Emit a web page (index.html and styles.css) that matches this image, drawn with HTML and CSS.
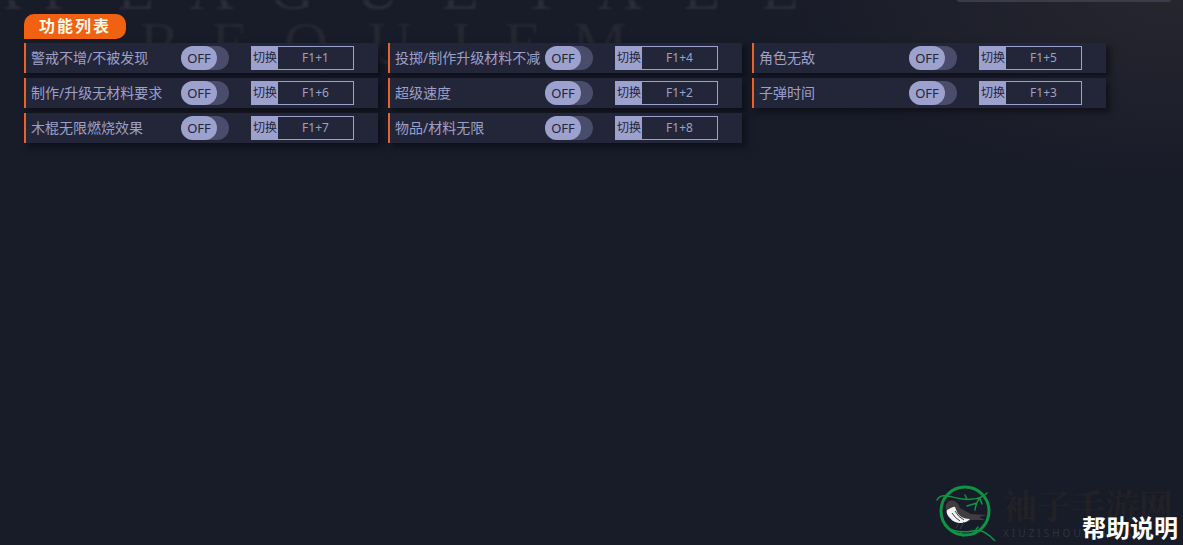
FILE: index.html
```
<!DOCTYPE html>
<html lang="zh-CN">
<head>
    <meta charset="UTF-8">
    <meta name="viewport" content="width=device-width, initial-scale=1.0">
    <title>功能列表</title>
    <link rel="stylesheet" href="styles.css">
</head>
<body>
    <svg class="backdrop" width="840" height="80" aria-hidden="true">
        <text class="backdrop-top" y="9" x="0 60 136 212 292 378 460 541 620 702 780">APLAGUETALE</text>
        <text class="backdrop-bottom" y="64" x="160 230 306 390 461 523 600">REQUIEM</text>
    </svg>
    <div class="top-bar"></div>

    <main class="content">
        <h1 class="title">功能列表</h1>
        <div class="options">
            <div class="option">
                <label class="option-name" for="opt1">警戒不增/不被发现</label>
                <label class="switch"><input type="checkbox" id="opt1"><span class="thumb">OFF</span></label>
                <div class="hotkey"><label for="key1">切换</label><input type="text" id="key1" value="F1+1" readonly></div>
            </div>
            <div class="option">
                <label class="option-name" for="opt2">投掷/制作升级材料不减</label>
                <label class="switch"><input type="checkbox" id="opt2"><span class="thumb">OFF</span></label>
                <div class="hotkey"><label for="key2">切换</label><input type="text" id="key2" value="F1+4" readonly></div>
            </div>
            <div class="option">
                <label class="option-name" for="opt3">角色无敌</label>
                <label class="switch"><input type="checkbox" id="opt3"><span class="thumb">OFF</span></label>
                <div class="hotkey"><label for="key3">切换</label><input type="text" id="key3" value="F1+5" readonly></div>
            </div>
            <div class="option">
                <label class="option-name" for="opt4">制作/升级无材料要求</label>
                <label class="switch"><input type="checkbox" id="opt4"><span class="thumb">OFF</span></label>
                <div class="hotkey"><label for="key4">切换</label><input type="text" id="key4" value="F1+6" readonly></div>
            </div>
            <div class="option">
                <label class="option-name" for="opt5">超级速度</label>
                <label class="switch"><input type="checkbox" id="opt5"><span class="thumb">OFF</span></label>
                <div class="hotkey"><label for="key5">切换</label><input type="text" id="key5" value="F1+2" readonly></div>
            </div>
            <div class="option">
                <label class="option-name" for="opt6">子弹时间</label>
                <label class="switch"><input type="checkbox" id="opt6"><span class="thumb">OFF</span></label>
                <div class="hotkey"><label for="key6">切换</label><input type="text" id="key6" value="F1+3" readonly></div>
            </div>
            <div class="option">
                <label class="option-name" for="opt7">木棍无限燃烧效果</label>
                <label class="switch"><input type="checkbox" id="opt7"><span class="thumb">OFF</span></label>
                <div class="hotkey"><label for="key7">切换</label><input type="text" id="key7" value="F1+7" readonly></div>
            </div>
            <div class="option">
                <label class="option-name" for="opt8">物品/材料无限</label>
                <label class="switch"><input type="checkbox" id="opt8"><span class="thumb">OFF</span></label>
                <div class="hotkey"><label for="key8">切换</label><input type="text" id="key8" value="F1+8" readonly></div>
            </div>
        </div>
    </main>

    <footer class="footer">
        <div class="brand">
            <svg class="brand-logo" width="62" height="58" viewBox="0 0 62 58" aria-hidden="true">
                <g fill="none" stroke="#0d9444" stroke-linecap="round">
                    <circle cx="30" cy="28" r="24" stroke-width="3"/>
                    <path d="M2 17C4 13 7 12 12 13C20 14 29 18 37 16C43 16 49 13 52 10M32 16L30 12M45 15Q41 19 40 27M42 20L32 23M45 16L47 21" stroke-width="1.5"/>
                    <path d="M10 43C17 48 27 50 37 48C47 46 51 50 56 54L60 58M25 49L28 53M40 48L43 44" stroke-width="1.5"/>
                </g>
                <path d="M11 26C9 20 16 15 21 19C24 21 24 23 25 25L36 31L52 32L44 34L50 37L36 37C31 41 18 40 14 34Z" fill="#413c3e"/>
                <path d="M12 27C15 26 18 23 20 24L22 29C24 33 28 36 35 36C30 42 19 41 15 35C12 32 11 29 12 27Z" fill="#f1f2f3"/>
                <path d="M17 30Q20 35 25 38M20 28Q23 34 29 37M24 40L21 45M29 39L25 46" fill="none" stroke="#413c3e" stroke-width="1"/>
            </svg>
            <div class="brand-text">
                <span class="brand-name">袖子手游网</span>
                <span class="brand-url">XIUZISHOUYOUWANG</span>
            </div>
        </div>
        <a class="help" href="#">帮助说明</a>
    </footer>
</body>
</html>
```
FILE: styles.css
```
* {
    box-sizing: border-box;
}

body {
    position: relative;
    display: flex;
    flex-direction: column;
    min-height: 100vh;
    margin: 0;
    overflow-x: hidden;
    font-family: "Noto Sans", "Noto Sans CJK SC", sans-serif;
    color: #9da0c9;
    background: radial-gradient(ellipse 420px 190px at 100% 0, #26262f, rgba(38, 38, 47, 0)) #181b28;
}

/* faded game title behind the list */
.backdrop {
    position: absolute;
    top: 0;
    left: 0;
    z-index: -1;
    font-family: "Liberation Serif", serif;
    font-size: 62px;
    text-anchor: middle;
    fill: #2b2d38;
    filter: blur(1px);
}

.backdrop-bottom {
    fill: #252731;
}

.top-bar {
    position: absolute;
    top: 0;
    right: 12px;
    width: 214px;
    height: 2px;
    border-radius: 0 0 8px 8px;
    background: #3a3c49;
}

.content {
    padding: 14px 24px;
}

.title {
    width: fit-content;
    margin: 0 0 4px;
    padding: 0 15px;
    border-radius: 10px 10px 10px 0;
    font-size: 16px;
    line-height: 25px;
    letter-spacing: 2px;
    color: #fff8e8;
    background: #f16112;
}

.options {
    display: flex;
    flex-wrap: wrap;
    gap: 5px 10px;
}

.option {
    display: flex;
    align-items: center;
    width: 354px;
    height: 30px;
    padding-left: 5px;
    border-left: 2px solid #e56331;
    background: #232538;
    box-shadow: 4px 4px 6px rgba(8, 8, 16, 0.6);
}

.option-name {
    width: 150px;
    font-size: 14px;
    line-height: 20px;
    white-space: nowrap;
}

.switch {
    width: 48px;
    height: 24px;
    border-radius: 12px;
    background: #4a4c6b;
    cursor: pointer;
}

.switch input {
    position: absolute;
    opacity: 0;
}

.thumb {
    display: block;
    width: 36px;
    border-radius: 12px;
    font-size: 13px;
    line-height: 24px;
    text-align: center;
    color: #232538;
    background: #9da1ce;
}

.hotkey {
    display: flex;
    width: 103px;
    height: 24px;
    margin-left: 22px;
    border: 1px solid #9da1ce;
    font-size: 12px;
    line-height: 22px;
}

.hotkey label {
    width: 26px;
    text-align: center;
    color: #232538;
    background: #9da1ce;
}

.hotkey input {
    flex: 1;
    min-width: 0;
    padding: 0;
    border: none;
    outline: none;
    font: inherit;
    text-align: center;
    color: #9da0c9;
    background: none;
}

.footer {
    position: relative;
    display: flex;
    justify-content: flex-end;
    margin-top: auto;
    padding: 0 10px 4px 0;
}

.brand {
    display: flex;
    gap: 6px;
    color: #222226;
}

.brand-text {
    display: flex;
    flex-direction: column;
}

.brand-name {
    font-family: "Noto Serif CJK SC", "Noto Sans CJK SC", serif;
    font-size: 34px;
    font-weight: bold;
    line-height: 44px;
}

.brand-url {
    width: 170px;
    font-size: 10px;
    line-height: 12px;
    letter-spacing: 3px;
    white-space: nowrap;
    color: #30313a;
}

.help {
    position: absolute;
    right: 5px;
    bottom: 0;
    font-size: 24px;
    font-weight: bold;
    line-height: 34px;
    color: #fff;
    text-decoration: none;
}
```
